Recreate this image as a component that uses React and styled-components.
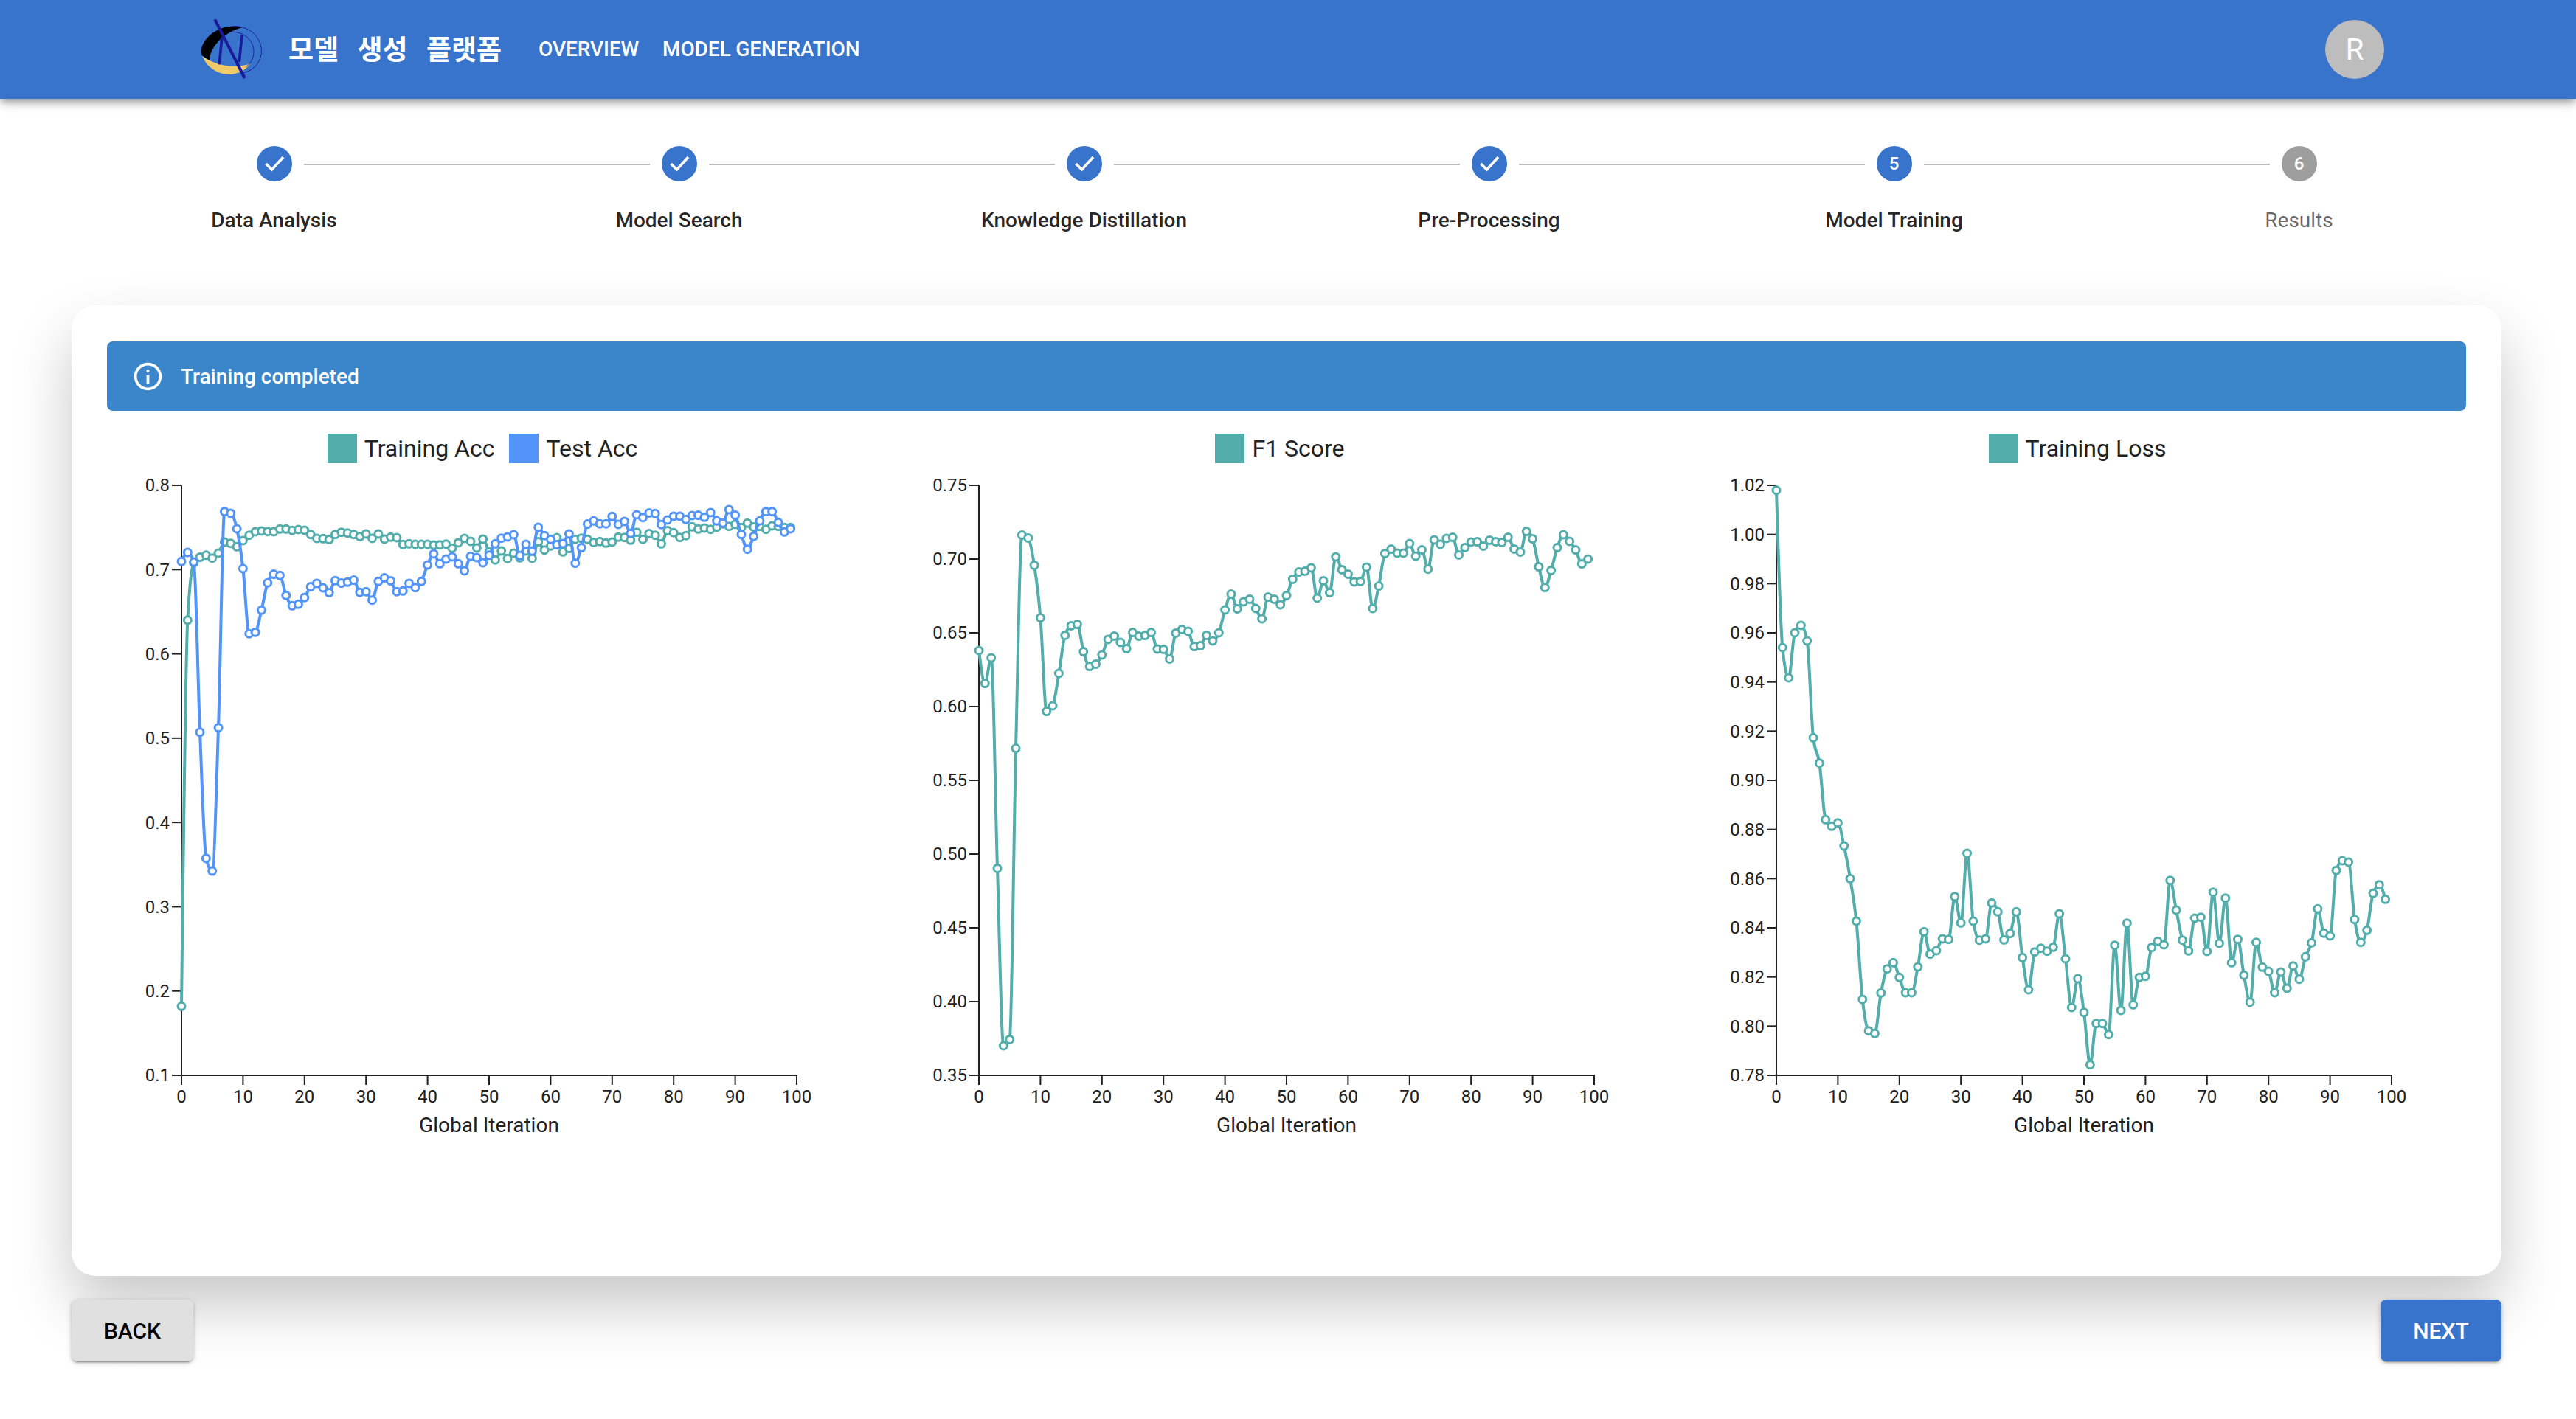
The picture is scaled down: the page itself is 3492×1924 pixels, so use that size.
import { styled, createGlobalStyle } from 'styled-components'
import { MdInfoOutline } from 'react-icons/md'

const BLUE = '#3874cb'
const TEAL = '#52adab'
const SKY = '#5294f8'

const trainAcc = [.182,.64,.708,.7146,.717,.7137,.7195,.7327,.7312,.7271,.7344,.7408,.7449,.7458,.7452,.7449,.7481,.7481,.7464,.7475,.7466,.7417,.737,.7367,.7356,.7417,.7443,.7434,.7417,.7391,.7423,.737,.7423,.7362,.7385,.7379,.7297,.7306,.73,.73,.73,.7292,.7294,.7303,.7254,.7318,.737,.7336,.7257,.7362,.721,.7114,.7222,.7131,.7196,.714,.7222,.7134,.733,.7233,.728,.7379,.721,.7251,.7359,.7373,.7359,.7321,.7333,.7315,.7327,.7385,.7382,.735,.7443,.7359,.7426,.7408,.7306,.7461,.7438,.7382,.7403,.7508,.7481,.7493,.7478,.7505,.7543,.7513,.7537,.7499,.7551,.7505,.7513,.7478,.7519,.7513,.7499,.7499]
const testAcc = [.7096,.7204,.709,.507,.3574,.3423,.5124,.7688,.7668,.7484,.7012,.6239,.6257,.6519,.6843,.6945,.693,.6694,.6571,.6589,.6668,.6796,.6837,.6784,.6726,.6869,.684,.6851,.6875,.6729,.6738,.6638,.686,.6901,.6866,.6738,.6746,.6837,.6787,.686,.7055,.7187,.707,.7126,.7152,.707,.6986,.7158,.7143,.7082,.7172,.7306,.7373,.7388,.7414,.7166,.73,.7219,.7502,.7403,.7359,.7295,.7309,.7423,.7076,.726,.754,.7578,.7543,.7543,.763,.7537,.7572,.7429,.765,.7618,.7671,.7665,.7534,.7589,.7633,.7633,.7595,.7642,.7645,.7621,.7677,.7578,.7551,.7712,.7645,.7417,.7242,.7394,.7578,.7688,.7688,.756,.7446,.7484]
const f1Score = [.638,.6157,.633,.4903,.37,.3743,.5717,.7163,.7143,.6958,.6602,.5967,.6005,.6225,.6483,.6548,.6557,.6372,.6272,.6288,.635,.6455,.6478,.6435,.6392,.6502,.6477,.6482,.6502,.639,.6388,.6323,.6498,.6522,.651,.6407,.6412,.6483,.6445,.65,.6655,.6762,.6663,.671,.6728,.6665,.6595,.6742,.6728,.669,.6753,.6863,.6912,.6918,.694,.6735,.6852,.6772,.7015,.6928,.6898,.6845,.6848,.6945,.6665,.6817,.7038,.7067,.704,.704,.7105,.702,.7063,.6932,.713,.71,.714,.7147,.7028,.7078,.7115,.7117,.7088,.7128,.7118,.7113,.7147,.7068,.7048,.7187,.7137,.6947,.6807,.6923,.7077,.7165,.712,.7062,.6967,.70]
const trainLoss = [1.018,.954,.9417,.96,.963,.9567,.9173,.907,.884,.8813,.8827,.8733,.86,.8427,.8109,.7981,.797,.8135,.8233,.8258,.8198,.8136,.8136,.8241,.8384,.8293,.8307,.8355,.8353,.8527,.842,.8703,.8427,.835,.8355,.8501,.8465,.8351,.8377,.8465,.8279,.8148,.8302,.8317,.8305,.8321,.8457,.8274,.8076,.8193,.8056,.7843,.8011,.8011,.7966,.8329,.8064,.8419,.8087,.8198,.8203,.832,.8345,.8331,.8593,.8472,.835,.8306,.8439,.8443,.8304,.8545,.8337,.8521,.8258,.8353,.8207,.8098,.8341,.824,.8223,.8136,.822,.8154,.8245,.8191,.8282,.8339,.8477,.8378,.8367,.8633,.8673,.8667,.8434,.8341,.839,.854,.8575,.8516]

const STEPS = ['Data Analysis', 'Model Search', 'Knowledge Distillation', 'Pre-Processing', 'Model Training', 'Results']

const CHARTS = [
  {
    min: 0.1, max: 0.8, step: 0.1, digits: 1,
    series: [
      { name: 'Training Acc', color: TEAL, data: trainAcc },
      { name: 'Test Acc', color: SKY, data: testAcc },
    ],
  },
  {
    min: 0.35, max: 0.75, step: 0.05, digits: 2,
    series: [{ name: 'F1 Score', color: TEAL, data: f1Score }],
  },
  {
    min: 0.78, max: 1.02, step: 0.02, digits: 2,
    series: [{ name: 'Training Loss', color: TEAL, data: trainLoss }],
  },
]

// plot box inside the chart svg
const PLOT = { left: 101, top: 18, width: 834, height: 800 }

const monotonePath = (pts) => {
  const n = pts.length
  const h = [], s = [], t = []
  for (let i = 0; i < n - 1; i++) {
    h[i] = pts[i + 1][0] - pts[i][0]
    s[i] = (pts[i + 1][1] - pts[i][1]) / h[i]
  }
  for (let i = 1; i < n - 1; i++) {
    const p = (s[i - 1] * h[i] + s[i] * h[i - 1]) / (h[i - 1] + h[i])
    t[i] = (Math.sign(s[i - 1]) + Math.sign(s[i])) * Math.min(Math.abs(s[i - 1]), Math.abs(s[i]), 0.5 * Math.abs(p))
  }
  t[0] = (3 * s[0] - t[1]) / 2
  t[n - 1] = (3 * s[n - 2] - t[n - 2]) / 2
  let d = `M${pts[0][0]},${pts[0][1]}`
  for (let i = 0; i < n - 1; i++) {
    const dx = h[i] / 3
    d += `C${pts[i][0] + dx},${pts[i][1] + dx * t[i]},${pts[i + 1][0] - dx},${pts[i + 1][1] - dx * t[i + 1]},${pts[i + 1][0]},${pts[i + 1][1]}`
  }
  return d
}

const GlobalStyle = createGlobalStyle`
  html, body {
    margin: 0;
    height: 1924px;
    overflow: hidden;
    background: #fff;
    font-family: Roboto, "Noto Sans CJK KR", sans-serif;
    color: rgba(0, 0, 0, 0.87);
  }
`

const AppBar = styled.header`
  position: relative;
  z-index: 2;
  height: 134px;
  box-sizing: border-box;
  padding: 0 260px 0 272px;
  display: flex;
  align-items: center;
  background: ${BLUE};
  color: #fff;
  box-shadow: 0 4px 8px -2px rgba(0, 0, 0, 0.25), 0 8px 10px rgba(0, 0, 0, 0.14), 0 2px 20px rgba(0, 0, 0, 0.12);
`

const Logo = styled.svg`
  width: 83px;
  height: 82px;
  margin-top: -2px;
`

const Title = styled.div`
  margin: -5px 0 0 36px;
  font-family: "Noto Sans CJK KR", Roboto, sans-serif;
  font-weight: 700;
  font-size: 37px;
  word-spacing: 17px;
  white-space: pre;
`

const Nav = styled.nav`
  margin-left: 50px;
  display: flex;
  gap: 32px;
`

const NavLink = styled.a`
  font-weight: 500;
  font-size: 28px;
  line-height: 36px;
  letter-spacing: -0.1px;
  text-transform: uppercase;
`

const Avatar = styled.div`
  margin-left: auto;
  width: 80px;
  height: 80px;
  border-radius: 50%;
  background: #bdbdbd;
  display: grid;
  place-items: center;
  font-size: 40px;
`

const Main = styled.main`
  padding: 64px 101px 0 97px;
`

const Stepper = styled.div`
  display: grid;
  grid-template-columns: repeat(6, 1fr);
`

const Step = styled.div`
  display: flex;
  flex-direction: column;
  align-items: center;
`

const StepHead = styled.div`
  width: 100%;
  display: flex;
  align-items: center;
  gap: 16px;
`

const Connector = styled.span`
  flex: 1;
  height: 2px;
  margin-top: 1px;
  background: ${(p) => (p.$hidden ? 'transparent' : '#bdbdbd')};
`

const StepCircle = styled.div`
  width: 48px;
  height: 48px;
  border-radius: 50%;
  display: grid;
  place-items: center;
  background: ${(p) => (p.$pending ? '#9e9e9e' : BLUE)};
  color: #fff;
  font-size: 24px;
  font-weight: 500;
`

const StepLabel = styled.div`
  margin-top: 37px;
  font-size: 28px;
  line-height: 32px;
  font-weight: ${(p) => (p.$pending ? 400 : 500)};
  color: ${(p) => (p.$pending ? 'rgba(0, 0, 0, 0.6)' : 'rgba(0, 0, 0, 0.87)')};
`

const Card = styled.section`
  margin-top: 99px;
  height: 1316px;
  box-sizing: border-box;
  padding: 49px 48px 0;
  background: #fff;
  border-radius: 32px;
  box-shadow: 0 40px 80px rgba(0, 0, 0, 0.22);
`

const Alert = styled.div`
  height: 94px;
  box-sizing: border-box;
  padding-left: 33px;
  display: flex;
  align-items: center;
  gap: 22px;
  background: #3b86cb;
  color: #fff;
  border-radius: 8px;
  font-size: 28px;
  font-weight: 500;
`

const ChartRow = styled.div`
  margin-top: 31px;
  display: grid;
  grid-template-columns: repeat(3, 1014px);
  gap: 67px;
`

const ChartBox = styled.div`
  display: flex;
  flex-direction: column;
  align-items: center;
`

const Legend = styled.div`
  display: flex;
  gap: 20px;
  height: 40px;
  padding-left: 4px;
  margin-bottom: 12px;
`

const LegendItem = styled.div`
  display: flex;
  align-items: center;
  gap: 10px;
  font-size: 32px;
  color: #212121;
`

const Swatch = styled.span`
  width: 40px;
  height: 40px;
  background: ${(p) => p.$color};
`

const ChartSvg = styled.svg`
  display: block;
  width: 1014px;
  height: 905px;
`

const AxisLine = styled.line`
  stroke: #212121;
  stroke-width: 2;
`

const TickText = styled.text`
  font-family: Roboto, sans-serif;
  font-size: 24px;
  fill: #212121;
`

const AxisTitle = styled.text`
  font-family: Roboto, sans-serif;
  font-size: 28px;
  fill: #212121;
`

const Footer = styled.div`
  margin-top: 32px;
  display: flex;
  justify-content: space-between;
`

const Button = styled.button`
  width: ${(p) => p.$width}px;
  height: 84px;
  border: 0;
  border-radius: 8px;
  background: ${(p) => (p.$primary ? BLUE : '#e0e0e0')};
  color: ${(p) => (p.$primary ? '#fff' : '#000')};
  font-family: Roboto, sans-serif;
  font-size: 30px;
  font-weight: 500;
  box-shadow: 0 3px 2px -2px rgba(0, 0, 0, 0.3), 0 2px 4px rgba(0, 0, 0, 0.18), 0 2px 10px rgba(0, 0, 0, 0.12);
`

const LogoMark = () => (
  <Logo viewBox="65 75 250 245">
    <path d="M235 110C170 92 92 128 70 190C65 206 67 218 72 226L100 245C106 192 150 135 235 110Z" fill="#000" />
    <path d="M72 228C90 272 130 300 180 303C215 304 250 285 268 258C215 280 130 270 72 228Z" fill="#efcb6a" />
    <path d="M190 107C260 98 313 150 313 205C313 250 285 285 240 296" fill="none" stroke="#1c1c9e" strokeWidth="3" />
    <path d="M180 130C240 122 282 165 282 208C282 235 270 258 250 272" fill="none" stroke="#1c1c9e" strokeWidth="3" />
    <path d="M152 150L141 262M234 143L222 252" fill="none" stroke="#1a1a9c" strokeWidth="11" />
    <path d="M123 78L245 318" fill="none" stroke="#1a1a9c" strokeWidth="12" />
  </Logo>
)

const CheckMark = () => (
  <svg width="48" height="48" viewBox="0 0 48 48">
    <path d="M12.5 24L20.5 32L36 15" fill="none" stroke="#fff" strokeWidth="3.6" />
  </svg>
)

const Chart = ({ min, max, step, digits, series }) => {
  const xAt = (i) => PLOT.left + (i / 100) * PLOT.width
  const yAt = (v) => PLOT.top + ((max - v) / (max - min)) * PLOT.height
  const bottom = PLOT.top + PLOT.height
  const yTicks = []
  const count = Math.round((max - min) / step)
  for (let i = 0; i <= count; i++) yTicks.push(min + i * step)
  const xTicks = [0, 10, 20, 30, 40, 50, 60, 70, 80, 90, 100]

  return (
    <ChartBox>
      <Legend>
        {series.map((s) => (
          <LegendItem key={s.name}>
            <Swatch $color={s.color} />
            {s.name}
          </LegendItem>
        ))}
      </Legend>
      <ChartSvg viewBox="0 0 1014 905">
        <AxisLine x1={PLOT.left} y1={PLOT.top} x2={PLOT.left} y2={bottom} />
        <AxisLine x1={PLOT.left - 1} y1={bottom} x2={PLOT.left + PLOT.width + 1} y2={bottom} />
        {yTicks.map((v) => (
          <g key={v}>
            <AxisLine x1={PLOT.left - 13} y1={yAt(v)} x2={PLOT.left} y2={yAt(v)} />
            <TickText x={PLOT.left - 16} y={yAt(v)} dy="0.35em" textAnchor="end">
              {v.toFixed(digits)}
            </TickText>
          </g>
        ))}
        {xTicks.map((v) => (
          <g key={v}>
            <AxisLine x1={xAt(v)} y1={bottom} x2={xAt(v)} y2={bottom + 13} />
            <TickText x={xAt(v)} y={bottom + 37} textAnchor="middle">
              {v}
            </TickText>
          </g>
        ))}
        <AxisTitle x={PLOT.left + PLOT.width / 2} y={bottom + 77} textAnchor="middle">
          Global Iteration
        </AxisTitle>
        {series.map((s) => {
          const pts = s.data.map((v, i) => [xAt(i), yAt(v)])
          return (
            <g key={s.name}>
              <path d={monotonePath(pts)} fill="none" stroke={s.color} strokeWidth="4" />
              {pts.map((p, i) => (
                <circle key={i} cx={p[0]} cy={p[1]} r="5" fill="#fff" stroke={s.color} strokeWidth="3" />
              ))}
            </g>
          )
        })}
      </ChartSvg>
    </ChartBox>
  )
}

const App = () => {
  return (
    <>
      <GlobalStyle />
      <AppBar>
        <LogoMark />
        <Title>모델 생성 플랫폼</Title>
        <Nav>
          <NavLink>Overview</NavLink>
          <NavLink>Model Generation</NavLink>
        </Nav>
        <Avatar>R</Avatar>
      </AppBar>
      <Main>
        <Stepper>
          {STEPS.map((label, i) => (
            <Step key={label}>
              <StepHead>
                <Connector $hidden={i === 0} />
                <StepCircle $pending={i === 5}>{i < 4 ? <CheckMark /> : i + 1}</StepCircle>
                <Connector $hidden={i === 5} />
              </StepHead>
              <StepLabel $pending={i === 5}>{label}</StepLabel>
            </Step>
          ))}
        </Stepper>
        <Card>
          <Alert>
            <MdInfoOutline size={45} />
            Training completed
          </Alert>
          <ChartRow>
            {CHARTS.map((c) => (
              <Chart key={c.series[0].name} {...c} />
            ))}
          </ChartRow>
        </Card>
        <Footer>
          <Button $width={165}>BACK</Button>
          <Button $width={164} $primary>NEXT</Button>
        </Footer>
      </Main>
    </>
  )
}

export default App
